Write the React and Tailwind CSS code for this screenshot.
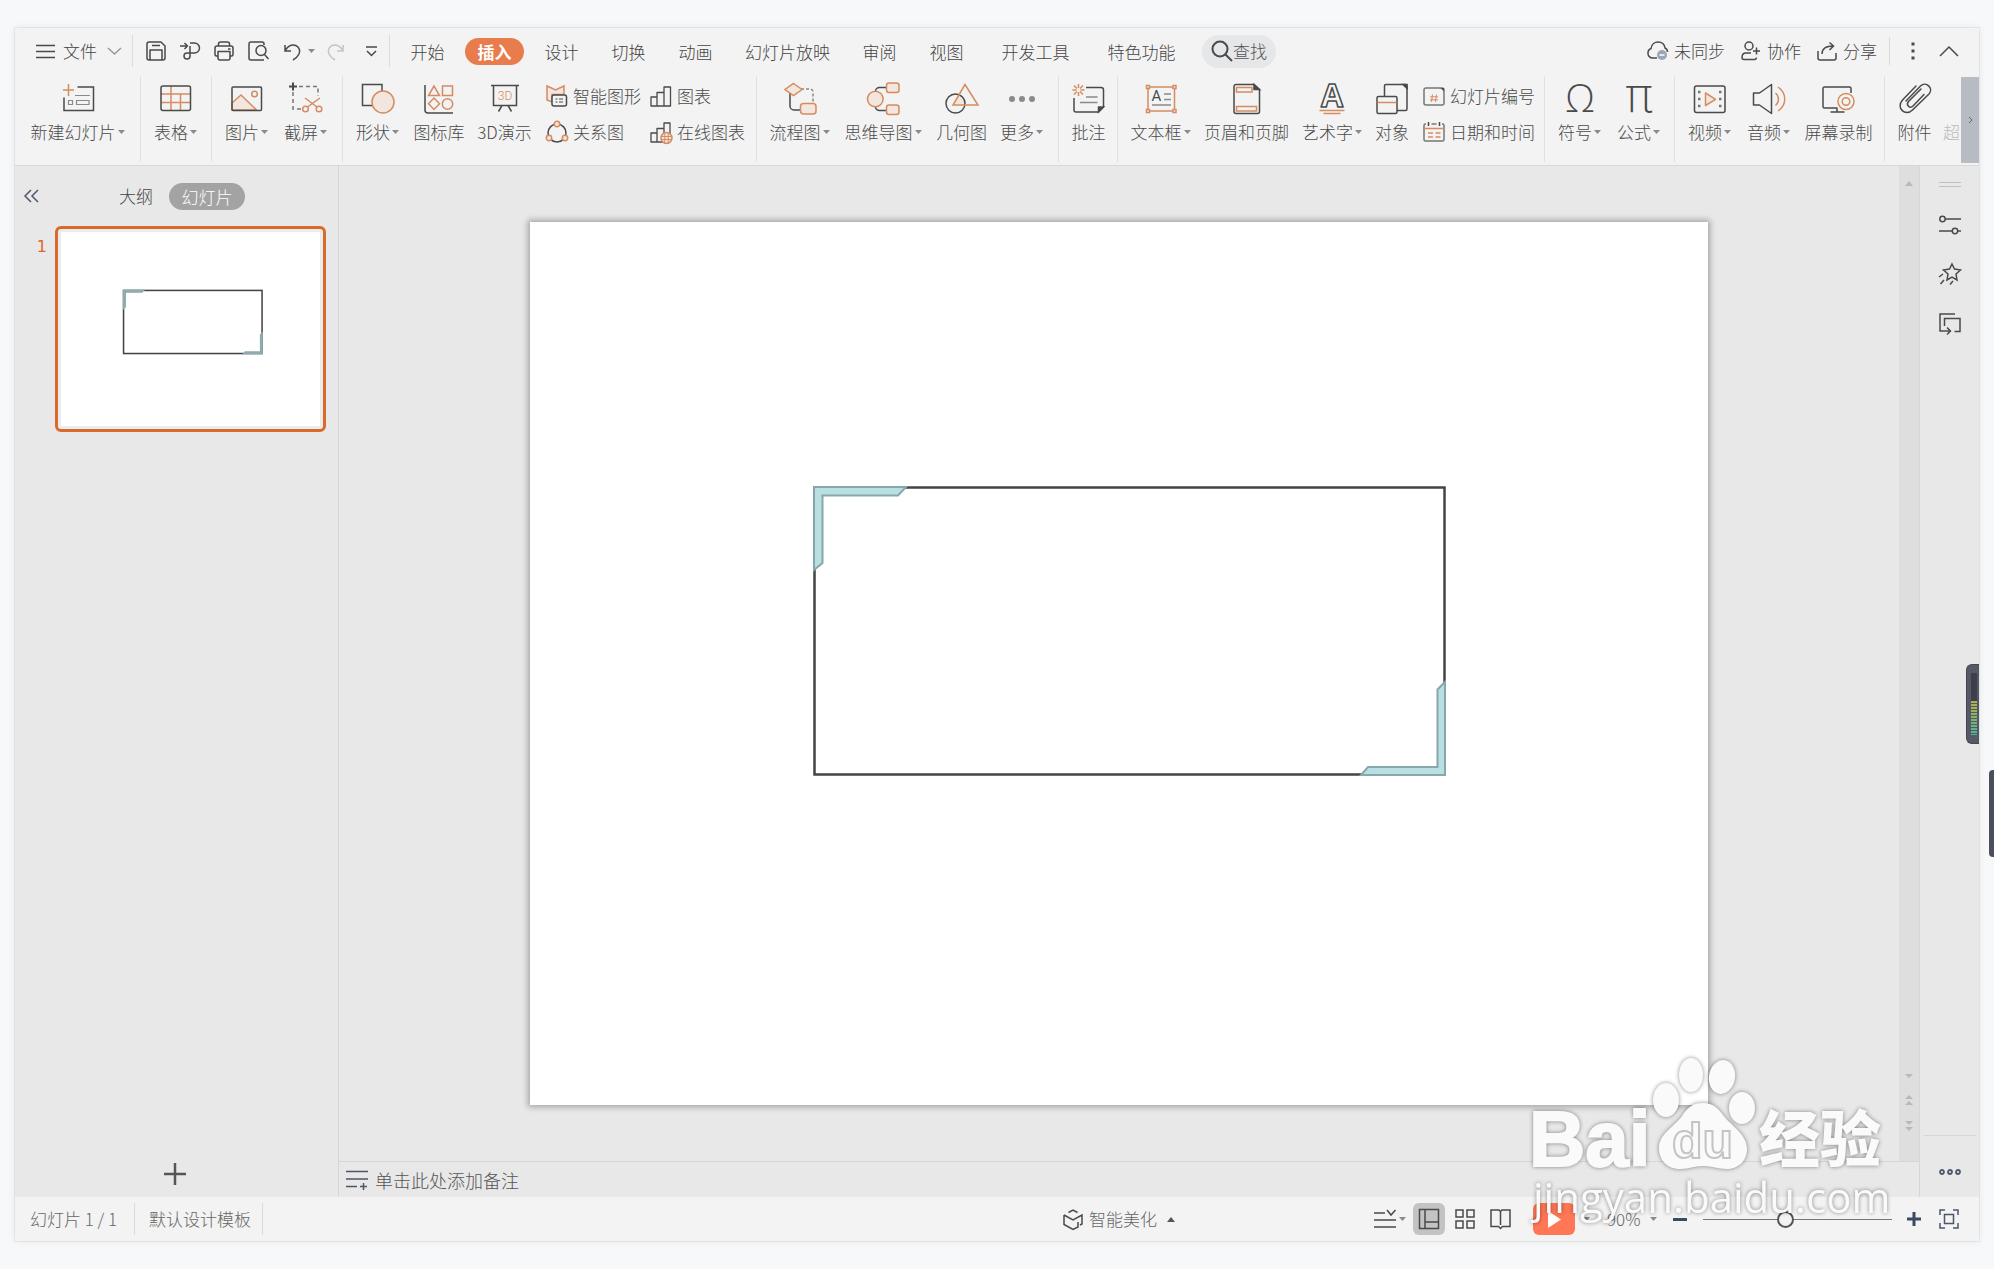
import React, { useState } from 'react';

const DARK = '#4a4a4a';
const ORANGE = '#d58c60';
const PEACH = '#f2e6df';

function Icon({ w = 34, h = 32, className = '', children }) {
  return (
    <svg
      width={w}
      height={h}
      viewBox={`0 0 ${w} ${h}`}
      fill="none"
      stroke={DARK}
      strokeWidth="1.5"
      className={`shrink-0 overflow-visible ${className}`}
      aria-hidden="true"
    >
      {children}
    </svg>
  );
}

function Caret({ up = false }) {
  return (
    <svg width="8" height="5" viewBox="0 0 8 5" fill={up ? '#555' : '#8a8a8a'} className="shrink-0" aria-hidden="true">
      <path d={up ? 'M0 5L4 0l4 5z' : 'M1 0h7L4.500 4z'} />
    </svg>
  );
}

function Divider() {
  return <div className="h-8 w-px shrink-0 bg-[#dcdcdc]" />;
}

/* ---------- ribbon icons ---------- */

const icons = {
  newSlide: (
    <Icon>
      <path d="M16.500 5H32.500V28.500H3V15.500" />
      <path d="M7.500 2v12M2 8h11" stroke={ORANGE} />
      <path d="M14 13.500h15M7.500 18.500h4v4h-4zM15.500 18.500h12.500v4h-12.500z" stroke="#8a8a8a" strokeWidth="1.200" />
    </Icon>
  ),
  table: (
    <Icon>
      <path d="M2 12h29M2 20.500h29M12 4v24M21.500 12v16" stroke={ORANGE} />
      <rect x="2" y="4" width="29.500" height="24.500" rx="2" />
    </Icon>
  ),
  picture: (
    <Icon>
      <path d="M2 21l9-8 15.500 15H2z" fill={PEACH} stroke={ORANGE} />
      <circle cx="24.500" cy="12" r="2.800" stroke={ORANGE} />
      <rect x="2" y="5" width="29.500" height="23.500" rx="1" />
    </Icon>
  ),
  screenshot: (
    <Icon>
      <path d="M10 4.500h19V14M4 10v17h8" strokeDasharray="4 3" stroke="#777" />
      <path d="M4 .5v8M0 4.500h8" strokeWidth="2" />
      <g stroke={ORANGE}>
        <circle cx="16.500" cy="27" r="2.800" />
        <circle cx="30" cy="27" r="2.800" />
        <path d="M18.500 25L31 16M28 25L16 16" />
      </g>
    </Icon>
  ),
  shape: (
    <Icon>
      <rect x="1.500" y="2.500" width="19.500" height="21" />
      <circle cx="22" cy="20" r="11" fill={PEACH} stroke={ORANGE} />
    </Icon>
  ),
  iconLib: (
    <Icon>
      <path d="M3 3v25a3 3 0 003 3h25" />
      <g stroke={ORANGE}>
        <path d="M12 4L6.500 13.500h11zM20.500 4h10v9.500h-10zM12 16l5.500 5.800L12 27.500l-5.500-5.700z" />
        <circle cx="25.500" cy="22" r="5.200" />
      </g>
    </Icon>
  ),
  threeD: (
    <Icon>
      <path d="M3 3.500h28M5.500 4v19.500h23V4M14 23.500l-3.500 6M20 23.500l3.500 6" />
      <text x="17" y="18" textAnchor="middle" fontSize="12" fontFamily="Roboto" fill={ORANGE} stroke="none">3D</text>
    </Icon>
  ),
  smart: (
    <Icon w={22} h={22}>
      <path d="M1 1l8.500 4L18 1v8.500H6V17L1 15z" fill={PEACH} stroke={ORANGE} />
      <rect x="6" y="10" width="14.500" height="11" rx="2" fill="#f3f3f3" />
      <path d="M9.500 14h2M13 14h4M9.500 17h2M13 17h4" strokeWidth="1" />
    </Icon>
  ),
  relation: (
    <Icon w={22} h={22}>
      <circle cx="11" cy="12" r="9" />
      <g fill={PEACH} stroke={ORANGE}>
        <circle cx="11" cy="3" r="2.700" />
        <circle cx="3" cy="17" r="2.700" />
        <circle cx="19" cy="17" r="2.700" />
      </g>
    </Icon>
  ),
  chart: (
    <Icon w={22} h={22}>
      <path d="M1 12h6v9H1zM7 7.500h7V21H7zM14 2h6.500v19H14z" strokeLinejoin="round" strokeWidth="1.300" />
    </Icon>
  ),
  onlineChart: (
    <Icon w={22} h={22}>
      <path d="M1 12h6v9H1zM7 7.500h7V21H7zM14 2h6v11H14z" strokeLinejoin="round" strokeWidth="1.300" />
      <circle cx="16.500" cy="17" r="5.500" fill={PEACH} stroke={ORANGE} />
      <path d="M11 15.500h11M11 18.500h11M14.800 11.500v11M18.200 11.500v11" stroke={ORANGE} strokeWidth="1" />
    </Icon>
  ),
  flow: (
    <Icon>
      <path d="M7 11v13a4 4 0 004 4h7" />
      <path d="M18 7h9a3 3 0 013 3v11" stroke="#888" strokeDasharray="3 2" />
      <path d="M10.500 1.500l8.500 6-8.500 6-8.500-6z" fill={PEACH} stroke={ORANGE} />
      <rect x="17.500" y="21.500" width="15.500" height="10.500" rx="3" fill={PEACH} stroke={ORANGE} />
    </Icon>
  ),
  mind: (
    <Icon>
      <path d="M9.500 9c0-2 2-3.500 4-3.500h7M9.500 25c0 2 2 3.500 4 3.500h7" />
      <g fill={PEACH} stroke={ORANGE}>
        <circle cx="9.300" cy="17" r="7.800" />
        <rect x="20.500" y="1" width="12.500" height="9.500" rx="2.500" />
        <rect x="20.500" y="23" width="12.500" height="9.500" rx="2.500" />
      </g>
    </Icon>
  ),
  geometry: (
    <Icon>
      <path d="M8.500 22.500l6-10.500a9.500 9.500 0 015.500 10.500z" fill={PEACH} stroke="none" />
      <circle cx="10.500" cy="21.500" r="9.500" />
      <path d="M20 2.500L8 23h25z" stroke={ORANGE} />
    </Icon>
  ),
  more: (
    <Icon>
      <g fill="#8a8a8a" stroke="none">
        <circle cx="7" cy="17" r="3" />
        <circle cx="17" cy="17" r="3" />
        <circle cx="27" cy="17" r="3" />
      </g>
    </Icon>
  ),
  comment: (
    <Icon>
      <path d="M14 5.500h15a2.500 2.500 0 012.500 2.500v17l-5 5H4a2 2 0 01-2-2V16" />
      <path d="M31.500 25h-5v5z" fill={DARK} />
      <path d="M14 15h11.500M8 20.500h17.500" stroke="#8a8a8a" />
      <path d="M6.500 2v4M6.500 10v4M.5 8h4M8.500 8h4M2 3.500l3 3M8 9.500l3 3M11 3.500l-3 3M5 9.500l-3 3" stroke={ORANGE} />
    </Icon>
  ),
  textBox: (
    <Icon>
      <g stroke={ORANGE}>
        <rect x="4" y="5" width="26.500" height="24" />
        <path d="M2.500 3.500h3v3h-3zM29 3.500h3v3h-3zM2.500 27.500h3v3h-3zM29 27.500h3v3h-3z" fill="#f3f3f3" />
      </g>
      <text x="12.500" y="19" textAnchor="middle" fontSize="15" fontWeight="400" fontFamily="Roboto" fill={DARK} stroke="none">A</text>
      <path d="M20 12h7M20 17.500h7M8 23h19" stroke="#8a8a8a" />
    </Icon>
  ),
  headerFooter: (
    <Icon>
      <path d="M6 2.500h18l5.500 5V29.500a2 2 0 01-2 2H6a2 2 0 01-2-2v-25a2 2 0 012-2z" />
      <path d="M24 2.500v5h5.500z" fill={DARK} />
      <path d="M6.500 5.500h15.500v4.500H6.500zM6.500 24.500h20v4.500h-20z" stroke={ORANGE} />
    </Icon>
  ),
  wordArt: (
    <Icon>
      <text x="17" y="25" textAnchor="middle" fontSize="32" fontWeight="700" fontFamily="Open Sans" strokeLinejoin="round">A</text>
      <path d="M4.500 28.500h25M8.500 31.500h17" stroke={ORANGE} />
    </Icon>
  ),
  object: (
    <Icon>
      <rect x="9.500" y="2.500" width="22.500" height="26" rx="1.500" />
      <path d="M28 2.500h4v4z" fill={DARK} />
      <rect x="2" y="14.500" width="20" height="17" rx="1.500" fill="#f3f3f3" />
      <path d="M2.500 20.500h19" stroke={ORANGE} />
    </Icon>
  ),
  slideNumber: (
    <Icon w={22} h={22}>
      <rect x="1" y="3" width="20" height="17" rx="2" stroke="#777" />
      <path d="M17.500 3H21v3.500z" fill={DARK} stroke="none" />
      <path d="M9.500 9.500L8.500 17M13.500 9.500l-1 7.500M7 11.800h8M7 14.800h8" stroke={ORANGE} strokeWidth="1" />
    </Icon>
  ),
  date: (
    <Icon w={22} h={22}>
      <path d="M3 3H2.500a1.500 1.500 0 00-1.500 1.500V18.500A1.500 1.500 0 002.500 20h17a1.500 1.500 0 001.500-1.500v-14A1.500 1.500 0 0019.500 3H19M8.500 3h5" stroke="#777" />
      <path d="M5.500 1v4M16.500 1v4" />
      <path d="M1 7.500h20M5 12h5M12.500 12h5M5 16h5M12.500 16h5" stroke={ORANGE} />
    </Icon>
  ),
  symbol: (
    <Icon>
      <text x="17" y="30" textAnchor="middle" fontSize="38" fontWeight="300" fontFamily="Open Sans, Noto Sans" fill={DARK} stroke="none">Ω</text>
    </Icon>
  ),
  formula: (
    <Icon>
      <text x="17" y="30" textAnchor="middle" fontSize="48" fontWeight="200" fontFamily="DejaVu Sans Light, DejaVu Sans" fill={DARK} stroke="none">π</text>
    </Icon>
  ),
  video: (
    <Icon>
      <rect x="1.500" y="4" width="30.500" height="26.500" rx="2" />
      <path d="M12.500 11l10 6.300-10 6.200z" fill={PEACH} stroke={ORANGE} strokeLinejoin="round" />
      <path d="M5 10h2.500M5 17h2.500M5 24h2.500M26 10h2.500M26 17h2.500M26 24h2.500" strokeWidth="2.500" stroke="#777" />
    </Icon>
  ),
  audio: (
    <Icon>
      <path d="M1.500 11H7.500L19.500 2.500v29L7.500 23H1.500z" strokeLinejoin="round" />
      <path d="M23.500 11c4 3.500 4 9 0 12.500M26 5c9 6 9 18 0 24" stroke={ORANGE} />
    </Icon>
  ),
  record: (
    <Icon>
      <path d="M29 11V6.500A1.500 1.500 0 0027.500 5h-25A1.500 1.500 0 001 6.500v18A1.500 1.500 0 002.500 26h13M15 26v3.500M8.500 30h14" />
      <g stroke={ORANGE} fill="#f3f3f3">
        <circle cx="24" cy="19.500" r="8" />
        <circle cx="24" cy="19.500" r="3.800" />
      </g>
    </Icon>
  ),
  attach: (
    <Icon>
      <path
        d="M26 12.500L15 24c-3 3-7.500-1-4.500-4.500L23 7M18 4L4.500 18c-7 8 3 17 10 10L31 12c5-6-3-13-8.500-8L8 19"
        strokeLinecap="round"
      />
    </Icon>
  ),
};

/* ---------- top row ---------- */

const quickTools = [
  { name: '保存', d: 'M3 1h12l4 4v12a2 2 0 01-2 2H3a2 2 0 01-2-2V3a2 2 0 012-2zM4 19V9h12v10M6 4.500h8' },
  { name: '输出', d: 'M0 5h7M4.500 2l3 3-3 3M10 2h4.500a5 5 0 010 10H7a3 3 0 100 6 3 3 0 003-3V5' },
  { name: '打印', d: 'M4.500 5V3a2 2 0 012-2h7a2 2 0 012 2v2M4 15H2.500A1.500 1.500 0 011 13.500V7a2 2 0 012-2h14a2 2 0 012 2v6.500a1.500 1.500 0 01-1.500 1.500H16M4 10.500h12V17a2 2 0 01-2 2H6a2 2 0 01-2-2zM14 8h2.500' },
  { name: '打印预览', d: 'M16 4V3a2 2 0 00-2-2H3a2 2 0 00-2 2v14a2 2 0 002 2h13M13 4.500a5 5 0 100 10 5 5 0 000-10zM16.500 13.500l4 4.500' },
];

const tabs = ['开始', '插入', '设计', '切换', '动画', '幻灯片放映', '审阅', '视图', '开发工具', '特色功能'];

const tabWidth = {
  2: 'w-[59px]',
  4: 'w-[93px] ml-[5px]',
  5: 'w-[109px]',
};

function TopRow() {
  const [active, setActive] = useState('插入');

  return (
    <div className="flex h-12 items-center pb-[2px] text-[#444]">
      <button className="ml-[21px] flex items-center gap-2">
        <Icon w={19} h={14}>
          <path d="M0 1.500h19M0 7.500h19M0 13.500h19" />
        </Icon>
        文件
      </button>
      <button aria-label="文件菜单" className="mx-[11px]">
        <Icon w={13} h={8}>
          <path d="M0 1l6.500 6L13 1" stroke="#999" />
        </Icon>
      </button>
      <Divider />
      <div className="ml-[13px] flex items-center gap-[14px]">
        {quickTools.map((tool) => (
          <button key={tool.name} aria-label={tool.name}>
            <Icon w={20} h={20}>
              <path d={tool.d} strokeLinejoin="round" />
            </Icon>
          </button>
        ))}
      </div>
      <button aria-label="撤销" className="ml-4 flex items-center gap-[6px]">
        <Icon w={17} h={18}>
          <path d="M1 3v6h6M1 9c3-6 9-8 13-4 4 5 0 10-5 13" />
        </Icon>
        <Caret />
      </button>
      <button aria-label="恢复" className="ml-3">
        <Icon w={17} h={18}>
          <path d="M16 3v6h-6M16 9C13 3 7 1 3 5c-4 5 0 10 5 13" stroke="#c4c4c4" />
        </Icon>
      </button>
      <button aria-label="自定义快速访问工具栏" className="ml-[22px] mr-3">
        <Icon w={11} h={12}>
          <path d="M0 2h11M1 6l4.500 4.500L10 6" />
        </Icon>
      </button>
      <Divider />
      <nav className="ml-2 flex items-center gap-2">
        {tabs.map((tab) => (
          <button
            key={tab}
            onClick={() => setActive(tab)}
            className={`h-[27px] rounded-full text-center leading-[27px] ${tabWidth[tab.length]} ${
              tab === active ? 'bg-[#e87c4c] font-bold text-white' : ''
            }`}
          >
            {tab}
          </button>
        ))}
      </nav>
      <button className="ml-[14px] flex h-[33px] w-[74px] items-center justify-center rounded-full bg-[#e6e7e9] text-[#555]">
        <Icon w={22} h={22}>
          <circle cx="9" cy="9" r="7.500" strokeWidth="2" />
          <path d="M14.500 14.500l6.500 6.500" strokeWidth="2" />
        </Icon>
        查找
      </button>

      <div className="ml-auto flex items-center">
        <button className="flex items-center gap-[5px]">
          <Icon w={23} h={20}>
            <path d="M11 17H6a5 5 0 01-1-9.500C5.500 3 9 1 12 1c4 0 6.500 2.500 7 6 1.500.5 2.500 2 2.500 4" />
            <circle cx="16" cy="14" r="5" fill="#9ba5b8" stroke="none" />
            <path d="M13.500 14h5" stroke="#fff" />
          </Icon>
          未同步
        </button>
        <button className="ml-4 flex items-center gap-[6px]">
          <Icon w={20} h={20}>
            <circle cx="8" cy="5" r="4" />
            <path d="M12 18.500H3a2 2 0 01-2-2C1 13 3 12 5 12h5M11 18.500h3a2 2 0 001.500-2M15.500 6.500v7M12 10h7" />
          </Icon>
          协作
        </button>
        <button className="ml-4 flex items-center gap-[6px]">
          <Icon w={20} h={20}>
            <path d="M1 10v7a2 2 0 002 2h14a2 2 0 002-2v-5M5 13c0-5 4-8 11-8M12.500 1.500L16.500 5l-4 4" />
          </Icon>
          分享
        </button>
        <div className="ml-3 h-7 w-px bg-[#dcdcdc]" />
        <button aria-label="更多选项" className="ml-[21px]">
          <Icon w={4} h={18}>
            <path d="M2 .5v3M2 7.500v3M2 14.500v3" strokeWidth="3" />
          </Icon>
        </button>
        <button aria-label="收起功能区" className="ml-6 mr-5">
          <Icon w={20} h={12}>
            <path d="M1 11l9-9 9 9" />
          </Icon>
        </button>
      </div>
    </div>
  );
}

/* ---------- ribbon ---------- */

const ribbon = [
  { width: 'w-[126px] pl-2', items: [{ label: '新建幻灯片', icon: 'newSlide', w: 'w-[109px]', menu: true }] },
  { width: 'w-[71px] pl-[5px]', items: [{ label: '表格', icon: 'table', w: 'w-[59px]', menu: true }] },
  {
    width: 'w-[131px] pl-[5px]',
    items: [
      { label: '图片', icon: 'picture', w: 'w-[59px]', menu: true },
      { label: '截屏', icon: 'screenshot', w: 'w-[59px]', menu: true },
    ],
  },
  {
    width: 'w-[414px] pl-[5px]',
    items: [
      { label: '形状', icon: 'shape', w: 'w-[59px]', menu: true },
      { label: '图标库', icon: 'iconLib', w: 'w-[64px]' },
      { label: '3D演示', icon: 'threeD', w: 'w-[67px]' },
      { w: 'w-[104px]', stack: [{ label: '智能图形', icon: 'smart' }, { label: '关系图', icon: 'relation' }] },
      { w: 'w-[108px]', stack: [{ label: '图表', icon: 'chart' }, { label: '在线图表', icon: 'onlineChart' }] },
    ],
  },
  {
    width: 'w-[302px] pl-[5px]',
    items: [
      { label: '流程图', icon: 'flow', w: 'w-[75px]', menu: true },
      { label: '思维导图', icon: 'mind', w: 'w-[92px]', menu: true },
      { label: '几何图', icon: 'geometry', w: 'w-[65px]' },
      { label: '更多', icon: 'more', w: 'w-[55px]', menu: true },
    ],
  },
  { width: 'w-[59px] pl-[5px]', items: [{ label: '批注', icon: 'comment', w: 'w-[49px]' }] },
  {
    width: 'w-[427px] pl-[5px]',
    items: [
      { label: '文本框', icon: 'textBox', w: 'w-[75px]', menu: true },
      { label: '页眉和页脚', icon: 'headerFooter', w: 'w-[97px]' },
      { label: '艺术字', icon: 'wordArt', w: 'w-[74px]', menu: true },
      { label: '对象', icon: 'object', w: 'w-[46px]' },
      { w: 'w-[120px]', stack: [{ label: '幻灯片编号', icon: 'slideNumber' }, { label: '日期和时间', icon: 'date' }] },
    ],
  },
  {
    width: 'w-[130px] pl-[5px]',
    items: [
      { label: '符号', icon: 'symbol', w: 'w-[59px]', menu: true },
      { label: '公式', icon: 'formula', w: 'w-[59px]', menu: true },
    ],
  },
  {
    width: 'w-[210px] pl-[5px]',
    items: [
      { label: '视频', icon: 'video', w: 'w-[59px]', menu: true },
      { label: '音频', icon: 'audio', w: 'w-[59px]', menu: true },
      { label: '屏幕录制', icon: 'record', w: 'w-[81px]' },
    ],
  },
];

function RibbonItem({ item }) {
  if (item.stack) {
    return (
      <div className={`shrink-0 pl-2 pt-[2px] ${item.w}`}>
        {item.stack.map((row) => (
          <button key={row.label} className="flex h-9 items-center gap-[5px] whitespace-nowrap">
            {icons[row.icon]}
            {row.label}
          </button>
        ))}
      </div>
    );
  }
  return (
    <button className={`flex shrink-0 flex-col items-center gap-[6px] self-start pt-[6px] ${item.w}`}>
      {icons[item.icon]}
      <span className="flex items-center gap-[1px] whitespace-nowrap leading-6">
        {item.label}
        {item.menu && <Caret />}
      </span>
    </button>
  );
}

function Ribbon() {
  return (
    <div className="flex h-[89px] text-[#4a4a4a]">
      <div className="flex min-w-0 flex-1 pb-[3px]">
        {ribbon.map((group) => (
          <div key={group.items[0].icon} className={`flex shrink-0 border-r border-[#e0e0e0] ${group.width}`}>
            {group.items.map((item) => (
              <RibbonItem key={item.w + item.icon} item={item} />
            ))}
          </div>
        ))}
        <div className="flex min-w-0 flex-1 overflow-hidden pl-[5px]">
          <RibbonItem item={{ label: '附件', icon: 'attach', w: 'w-[49px]' }} />
          <button aria-label="超链接" className="shrink-0 self-start pl-1 pt-11 leading-6 text-[#bbb]">
            超
          </button>
        </div>
      </div>
      <button aria-label="向右滚动" className="mb-[2px] mt-[1px] flex w-[18px] shrink-0 items-center justify-center bg-[#b7bbc4]">
        <Icon w={5} h={8}>
          <path d="M1 1l3 3-3 3" stroke="#666" strokeWidth="1" />
        </Icon>
      </button>
    </div>
  );
}

/* ---------- slide drawing ---------- */

function SlideArt({ thin = false }) {
  const fill = thin ? '#8fabb0' : '#b9dfe2';
  return (
    <svg viewBox="0 0 1178 883" className="block h-full w-full" aria-label="幻灯片内容">
      <rect x="284.500" y="265.500" width="630" height="287" fill="none" stroke="#444" strokeWidth={thin ? 7 : 2.500} />
      <g fill={fill} stroke={thin ? '#8fabb0' : '#86a7ab'} strokeWidth={thin ? 6 : 2}>
        <path d="M284 265h92l-8 8.500H292.500V341l-8.500 7z" />
        <path d="M915 460l-7.500 7.500V545H838l-7 8h84z" />
      </g>
    </svg>
  );
}

function SlidePanel() {
  return (
    <aside className="flex w-[324px] shrink-0 flex-col border-r border-[#d6d6d6]">
      <div className="flex h-[60px] items-center text-[#444]">
        <button aria-label="收起" className="ml-[9px]">
          <Icon w={15} h={14}>
            <path d="M7 1L1 7l6 6M14 1L8 7l6 6" stroke="#4d566b" />
          </Icon>
        </button>
        <button className="ml-20">大纲</button>
        <button className="ml-4 h-[27px] w-[76px] rounded-full bg-[#a3a3a3] text-center leading-[27px] text-white">幻灯片</button>
      </div>
      <div className="flex">
        <span className="w-10 pr-2 pt-[11px] text-right font-['DejaVu_Sans'] text-base font-normal leading-5 text-[#d96a2c]">1</span>
        <button aria-label="幻灯片 1" className="w-[271px] rounded-md border-[3px] border-[#d96a2c] bg-[#ececec] p-[3px]">
          <div className="aspect-[4/3] bg-white">
            <SlideArt thin />
          </div>
        </button>
      </div>
      <button aria-label="新建幻灯片" className="mb-3 ml-[149px] mt-auto w-[22px]">
        <Icon w={22} h={22}>
          <path d="M11 0v22M0 11h22" stroke="#555" strokeWidth="2.500" />
        </Icon>
      </button>
    </aside>
  );
}

function ScrollBar() {
  return (
    <div className="flex w-5 shrink-0 flex-col items-center bg-[#dedede] pb-[30px] pt-[15px]">
      <svg width="8" height="5" fill="#b8b8b8" aria-hidden="true"><path d="M0 5l4-5 4 5z" /></svg>
      <svg width="8" height="5" fill="#b8b8b8" className="mt-auto" aria-hidden="true"><path d="M0 0l4 4 4-4z" /></svg>
      <svg width="8" height="10" fill="#b8b8b8" className="mt-4" aria-hidden="true"><path d="M0 4l4-4 4 4zM0 10l4-4 4 4z" /></svg>
      <svg width="8" height="10" fill="#b8b8b8" className="mt-4" aria-hidden="true"><path d="M0 0l4 4 4-4zM0 6l4 4 4-4z" /></svg>
    </div>
  );
}

function SidePane() {
  return (
    <aside className="flex w-[60px] shrink-0 flex-col items-center border-l border-[#d6d6d6] pt-4">
      <Icon w={22} h={5}>
        <path d="M0 .5h22M0 4.500h22" stroke="#c0c0c0" strokeWidth="1" />
      </Icon>
      <button aria-label="对象属性" className="mt-7">
        <Icon w={22} h={20}>
          <circle cx="3.500" cy="4" r="2.700" />
          <path d="M6.500 4H22M0 16h13M19 16h3" />
          <circle cx="16" cy="16" r="2.700" />
        </Icon>
      </button>
      <button aria-label="动画窗格" className="mt-7">
        <Icon w={22} h={22}>
          <path d="M13 1l2.500 5 6 1-4.500 4 1 6-5-2.800L8 17l1-6-4.500-4 6-1zM4 11l-4 3M5 17l-3.500 4M14 18l-3 3.500" />
        </Icon>
      </button>
      <button aria-label="选择窗格" className="mt-7">
        <Icon w={22} h={20}>
          <path d="M16 1H1v17h10M8 14.500l3.500 3.500L8 21.500M5.500 13V5.500H21V18.500h-5.500" />
        </Icon>
      </button>
      <div className="mt-auto h-px w-[52px] bg-[#d6d6d6]" />
      <button aria-label="更多" className="mb-[22px] mt-[33px]">
        <Icon w={22} h={6}>
          <g stroke="#4d566b" strokeWidth="1.800">
            <circle cx="3" cy="3" r="2" />
            <circle cx="11" cy="3" r="2" />
            <circle cx="19" cy="3" r="2" />
          </g>
        </Icon>
      </button>
    </aside>
  );
}

/* ---------- status bar ---------- */

function StatusBar() {
  const [zoom, setZoom] = useState(43);

  return (
    <footer className="flex h-11 items-center bg-[#f3f3f3] text-[#666]">
      <span className="ml-[15px] w-[104px]">幻灯片 1 / 1</span>
      <Divider />
      <span className="ml-[14px] w-[113px]">默认设计模板</span>
      <Divider />
      <button className="ml-auto flex items-center gap-[6px]">
        <Icon w={20} h={21}>
          <path d="M5.500 3.500l4.500-2.500 4.500 2.500M1 6v9.500l9 5 5-2.500V13M1 6l9 5 9-5v9l-2 1" />
        </Icon>
        智能美化
        <span className="ml-1"><Caret up /></span>
      </button>
      <button aria-label="备注" className="ml-[199px] flex items-center gap-[2px]">
        <Icon w={22} h={20}>
          <path d="M0 4h11M0 11h22M0 18h22M13 1l4 5 4.500-5" />
        </Icon>
        <Caret />
      </button>
      <button aria-label="普通视图" className="ml-[7px] flex size-8 items-center justify-center rounded-md bg-[#c3c3c3]">
        <Icon w={20} h={20}>
          <path d="M.5.5h19v19H.5zM6 0v20M6 13h14" />
        </Icon>
      </button>
      <button aria-label="幻灯片浏览" className="ml-[10px]">
        <Icon w={20} h={20}>
          <path d="M1 1h7v7H1zM12 1h7v7h-7zM1 12h7v7H1zM12 12h7v7h-7z" />
        </Icon>
      </button>
      <button aria-label="阅读视图" className="ml-[15px]">
        <Icon w={21} h={20}>
          <path d="M10.500 2.500L9 1H1v16.500h7.500l2 2 2-2H20V1h-8zM10.500 2.500V16" />
        </Icon>
      </button>
      <button aria-label="放映" className="ml-[22px] flex h-8 w-[42px] items-center justify-center rounded-md bg-[#ff7755]">
        <svg width="13" height="17" fill="#fff" aria-hidden="true"><path d="M0 0l13 8.500L0 17z" /></svg>
      </button>
      <button aria-label="放映选项" className="ml-[7px]"><Caret /></button>
      <select aria-label="显示比例" defaultValue="90%" className="ml-[17px] w-[38px] appearance-none bg-transparent">
        <option>90%</option>
      </select>
      <span className="ml-1"><Caret /></span>
      <button aria-label="缩小" className="ml-4 h-[3px] w-[14px] bg-[#3c4a66]" />
      <input
        type="range"
        aria-label="缩放"
        value={zoom}
        onChange={(e) => setZoom(e.target.value)}
        className="ml-4 h-[18px] w-[189px] appearance-none bg-transparent [&::-webkit-slider-runnable-track]:h-px [&::-webkit-slider-runnable-track]:bg-[#777] [&::-webkit-slider-thumb]:-mt-2 [&::-webkit-slider-thumb]:size-[17px] [&::-webkit-slider-thumb]:appearance-none [&::-webkit-slider-thumb]:rounded-full [&::-webkit-slider-thumb]:border-2 [&::-webkit-slider-thumb]:border-[#555] [&::-webkit-slider-thumb]:bg-[#f3f3f3]"
      />
      <button aria-label="放大" className="ml-[15px]">
        <Icon w={14} h={14}>
          <path d="M7 0v14M0 7h14" stroke="#3c4a66" strokeWidth="3" />
        </Icon>
      </button>
      <button aria-label="适应窗口" className="ml-[18px] mr-5">
        <Icon w={20} h={20}>
          <path d="M1 6V1h5M14 1h5v5M19 14v5h-5M6 19H1v-5M5.500 5.500h9v9h-9z" stroke="#4d566b" />
        </Icon>
      </button>
    </footer>
  );
}

function Watermark() {
  return (
    <svg
      width="370"
      height="185"
      viewBox="0 0 370 185"
      className="pointer-events-none absolute bottom-[34px] right-[99px] overflow-visible drop-shadow-[0_0_2px_rgba(0,0,0,0.45)]"
      fill="#fafafa"
      aria-hidden="true"
    >
      <ellipse cx="141" cy="50" rx="13" ry="17" />
      <ellipse cx="166" cy="25" rx="12" ry="17" />
      <ellipse cx="197" cy="27" rx="13" ry="17" transform="rotate(10 197 27)" />
      <ellipse cx="217" cy="58" rx="13" ry="16" />
      <path d="M178 53C188 53 193 58 198 65C206 76 222 84 222 99C222 112 212 119 202 119C192 119 188 116 178 116C168 116 165 119 155 119C142 119 134 110 134 98C134 84 148 78 157 66C163 57 168 53 178 53Z" />
      <text x="4" y="116" fontSize="78" fontWeight="700" fontFamily="Liberation Sans" stroke="#fafafa" strokeWidth="2">Bai</text>
      <text x="147" y="108" fontSize="50" fontWeight="700" fontFamily="Liberation Sans" stroke="#c4c4c4" strokeWidth="2">du</text>
      <text x="234" y="112" fontSize="61" fontWeight="900" fontFamily="Noto Sans CJK SC">经验</text>
      <text x="8" y="163" fontSize="42" fontWeight="400" fontFamily="Open Sans, Noto Sans">jingyan.baidu.com</text>
    </svg>
  );
}

function App() {
  return (
    <div className="relative flex min-h-screen flex-col overflow-hidden bg-[#f7f8fa] px-[15px] py-7 font-['Noto_Sans_CJK_SC',sans-serif] text-[17px] font-light leading-6">
      <div className="relative flex flex-1 flex-col bg-[#e8e8e8] shadow-[0_0_0_1px_rgba(0,0,0,0.05),0_0_8px_rgba(0,0,0,0.08)]">
        <header className="border-b border-[#d8d8d8] bg-[#f3f3f3]">
          <TopRow />
          <Ribbon />
        </header>

        <div className="flex flex-1">
          <SlidePanel />
          <section className="flex min-w-0 flex-1 flex-col">
            <div className="flex flex-1">
              <main className="flex min-w-0 flex-1 items-center justify-center">
                <div className="aspect-[1178/883] w-[1178px] max-w-full bg-white shadow-[0_0_6px_2px_rgba(0,0,0,0.3)]">
                  <SlideArt />
                </div>
              </main>
              <ScrollBar />
            </div>
            <div className="flex h-9 items-center gap-[7px] border-t border-[#d6d6d6] pl-[7px]">
              <Icon w={22} h={20}>
                <path d="M0 1.500h22M0 9h22M0 16.500h11M14 16.500h7M17.500 13v7" stroke="#4d566b" />
              </Icon>
              <input aria-label="备注" placeholder="单击此处添加备注" className="flex-1 bg-transparent text-lg leading-6 placeholder:text-[#555]" />
            </div>
          </section>
          <SidePane />
        </div>

        <StatusBar />

        {/* volume meter docked to the window edge */}
        <div className="absolute right-0 top-[636px] h-20 w-[13px] rounded-l-md border border-r-0 border-[#44474f] bg-[#555966] px-1 py-2">
          <div className="h-[28px] w-[6px] bg-[#3d404a]" />
          <div className="h-[34px] w-[6px] bg-[repeating-linear-gradient(transparent_0_2px,#555966_2px_3px),linear-gradient(#b5b04a,#83b56a,#48b5a0)]" />
        </div>
      </div>

      <div className="absolute right-0 top-[770px] h-[87px] w-[5px] rounded-l-sm bg-[#4b4f5b]" />
      <Watermark />
    </div>
  );
}

export default App;
